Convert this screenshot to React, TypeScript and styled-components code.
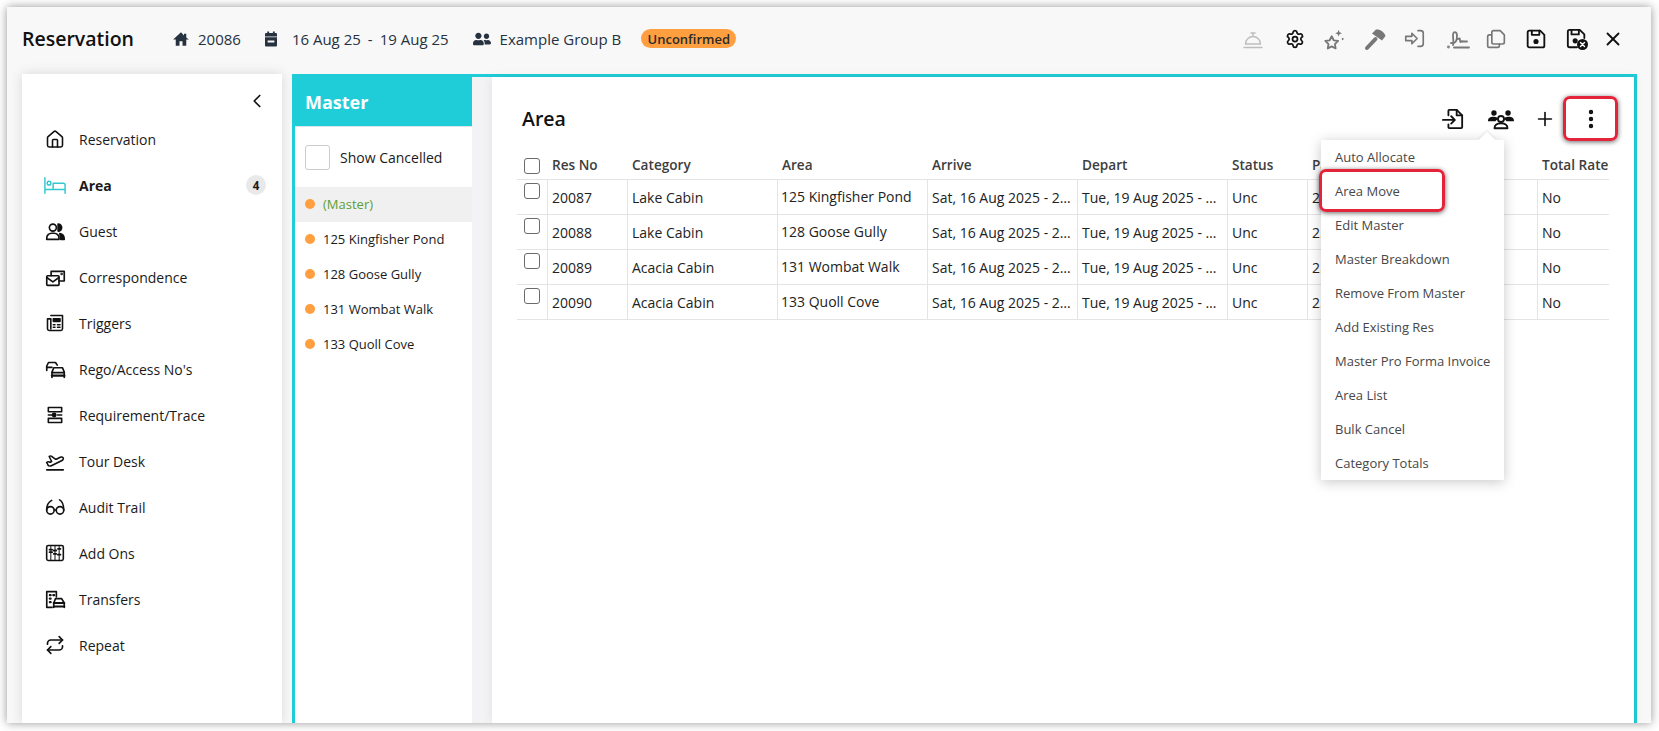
import React from "react";
import styled, { createGlobalStyle } from "styled-components";
import { Settings, X, Plus, EllipsisVertical, Repeat, PlaneTakeoff, House, ChevronLeft } from "lucide-react";
import { FaUserFriends } from "react-icons/fa";

const Global = createGlobalStyle`
  html, body { margin: 0; padding: 0; background: #fff; }
  body { font-family: "Open Sans", "Noto Sans", sans-serif; color: #1a1a1a; }
  * { box-sizing: border-box; }
`;

const Page = styled.div`
  width: 1659px;
  height: 731px;
  padding: 7px 8px 8px 7px;
  overflow: hidden;
`;
const Win = styled.div`
  width: 1644px;
  height: 716px;
  background: #f8f8f8;
  box-shadow: 0 0 9px rgba(0, 0, 0, 0.42);
  display: flex;
  flex-direction: column;
  overflow: hidden;
`;
const TopBar = styled.header`
  height: 67px;
  flex: none;
  display: flex;
  align-items: center;
  padding: 0 0 4px 15px;
`;
const Title = styled.h1`
  margin: 0 40px 0 0;
  width: 110px;
  font-size: 19.5px;
  font-weight: 600;
  color: #111;
  white-space: nowrap;
`;
const Meta = styled.div<{ $gap: number; $mr: number }>`
  display: flex;
  align-items: center;
  gap: ${(p) => p.$gap}px;
  margin-right: ${(p) => p.$mr}px;
  font-size: 15px;
  color: #26323f;
`;
const Dash = styled.span`
  margin: 0 7px;
`;
const Badge = styled.span`
  height: 19px;
  width: 95px;
  margin-left: -4px;
  border-radius: 10px;
  background: #ff9f3f;
  color: #2b2b2b;
  font-size: 13px;
  font-weight: 600;
  display: flex;
  align-items: center;
  justify-content: center;
`;
const TopActions = styled.div`
  margin-left: auto;
  padding-right: 27px;
  display: flex;
  align-items: center;
`;
const TopAction = styled.span<{ $ml: number; $c: string }>`
  display: flex;
  margin-left: ${(p) => p.$ml}px;
  color: ${(p) => p.$c};
`;
const Ico = styled.svg.attrs<{ fill?: string; stroke?: string }>((p) => ({
  viewBox: "0 0 24 24",
  fill: p.fill ?? "none",
  stroke: p.stroke ?? "currentColor",
  strokeLinecap: "round",
  strokeLinejoin: "round",
}))<{ $s?: number }>`
  width: ${(p) => p.$s ?? 20}px;
  height: ${(p) => p.$s ?? 20}px;
  flex: none;
  display: block;
`;

const Body = styled.div`
  flex: 1;
  min-height: 0;
  display: flex;
  padding: 0 14px 0 15px;
`;
const Side = styled.nav`
  width: 260px;
  flex: none;
  background: #fff;
  box-shadow: 0 0 12px rgba(0, 0, 0, 0.13);
  margin-right: 10px;
  display: flex;
  flex-direction: column;
`;
const Collapse = styled.div`
  height: 43px;
  display: flex;
  align-items: center;
  justify-content: flex-end;
  padding: 11px 14px 0 0;
  color: #111;
`;
const SideList = styled.ul`
  list-style: none;
  margin: 0;
  padding: 0;
`;
const SideItem = styled.li<{ $active?: boolean }>`
  height: 46px;
  display: flex;
  align-items: center;
  padding: 0 16px 2px 23px;
  font-size: 14px;
  font-weight: ${(p) => (p.$active ? 700 : 400)};
  color: #1a1a1a;
`;
const SideIcon = styled.span<{ $c?: string }>`
  width: 20px;
  margin-right: 14px;
  display: flex;
  justify-content: center;
  color: ${(p) => p.$c ?? "#111"};
`;
const Count = styled.span`
  margin-left: auto;
  width: 20px;
  height: 20px;
  border-radius: 50%;
  background: #e9e9e9;
  font-size: 11.5px;
  font-weight: 700;
  display: flex;
  align-items: center;
  justify-content: center;
`;

const Frame = styled.div`
  flex: 1;
  min-width: 0;
  border: 3px solid #1fcdd8;
  border-bottom: 0;
  display: flex;
  background: #f3f3f5;
`;
const MasterCol = styled.aside`
  width: 177px;
  flex: none;
  background: #fff;
  margin-right: 20px;
`;
const MasterHead = styled.div`
  height: 50px;
  background: #1fcdd8;
  border-bottom: 1px solid #d9e6e8;
  color: #fff;
  font-size: 18px;
  font-weight: 700;
  display: flex;
  align-items: center;
  padding: 0 0 0 10px;
`;
const ShowRow = styled.label`
  height: 60px;
  display: flex;
  align-items: center;
  padding: 0 0 0 10px;
  font-size: 14px;
  color: #1a1a1a;
`;
const BigBox = styled.span`
  width: 25px;
  height: 25px;
  border: 1px solid #ccc;
  border-radius: 3px;
  margin-right: 10px;
`;
const AreaRow = styled.div<{ $active?: boolean }>`
  height: 35px;
  display: flex;
  align-items: center;
  padding: 0 0 1px 10px;
  font-size: 13px;
  background: ${(p) => (p.$active ? "#f0f0f0" : "#fff")};
  color: ${(p) => (p.$active ? "#5f9e33" : "#1a1a1a")};
`;
const Dot = styled.span`
  width: 10px;
  height: 10px;
  border-radius: 50%;
  background: #ff9f3f;
  margin-right: 8px;
`;

const Main = styled.main`
  flex: 1;
  min-width: 0;
  position: relative;
  background: #fff;
  box-shadow: 0 0 10px rgba(0, 0, 0, 0.08);
  padding: 18px 25px 0;
`;
const MainHead = styled.div`
  height: 48px;
  margin-bottom: 7px;
  display: flex;
  align-items: center;
`;
const MainTitle = styled.h2`
  margin: 0 0 2px 5px;
  font-size: 19.5px;
  font-weight: 600;
  color: #111;
`;
const MainActions = styled.div`
  margin-left: auto;
  margin-right: -10px;
  display: flex;
  align-items: center;
`;
const MainAction = styled.span<{ $w: number }>`
  width: ${(p) => p.$w}px;
  display: flex;
  justify-content: center;
  color: #111;
`;
const Table = styled.table`
  width: 1092px;
  border-collapse: separate;
  border-spacing: 0;
  table-layout: fixed;
`;
const Th = styled.th`
  height: 30px;
  padding: 0 5px;
  border-bottom: 1px solid #e4e4e4;
  text-align: left;
  font-size: 13.6px;
  font-weight: 600;
  color: #3d3d3d;
  white-space: nowrap;
  overflow: hidden;
`;
const Td = styled.td<{ $tight?: boolean }>`
  height: 35px;
  padding: ${(p) => (p.$tight ? "0 2px 2px 3px" : "0 4px")};
  border-bottom: 1px solid #e4e4e4;
  border-left: 1px solid #e4e4e4;
  font-size: 14px;
  color: #222;
  white-space: nowrap;
  overflow: hidden;
  text-overflow: ellipsis;
`;
const CheckTd = styled.td`
  height: 35px;
  padding: 3px 0 0 7px;
  border-bottom: 1px solid #e4e4e4;
  vertical-align: top;
`;
const CheckTh = styled.th`
  padding: 2px 0 0 7px;
  border-bottom: 1px solid #e4e4e4;
`;
const Box = styled.span`
  display: block;
  width: 16px;
  height: 16px;
  border: 1px solid #6b6b6b;
  border-radius: 3px;
  background: #fff;
`;
const Menu = styled.ul`
  position: absolute;
  top: 63px;
  right: 130px;
  width: 183px;
  margin: 0;
  padding: 0;
  list-style: none;
  background: #fff;
  box-shadow: 0 2px 12px rgba(0, 0, 0, 0.22);
  &::before {
    content: "";
    position: absolute;
    top: -6px;
    right: 11px;
    width: 12px;
    height: 12px;
    background: #fff;
    transform: rotate(45deg);
    box-shadow: -1px -1px 2px rgba(0, 0, 0, 0.08);
  }
`;
const MenuItem = styled.li`
  position: relative;
  height: 34px;
  padding: 0 0 1px 14px;
  display: flex;
  align-items: center;
  font-size: 13px;
  color: #474747;
`;
const Callout = styled.div`
  position: absolute;
  border: 3px solid #e3243b;
  border-radius: 7px;
  box-shadow: 0 1px 5px rgba(0, 0, 0, 0.6);
  pointer-events: none;
`;
const MoreCallout = styled(Callout)`
  top: 19px;
  right: 16px;
  width: 55px;
  height: 45px;
`;
const MoveCallout = styled(Callout)`
  top: 92px;
  right: 189px;
  width: 126px;
  height: 43px;
`;

const ICON_W = 1.9;
const I = {
  Home: () => <Ico $s={18} fill="currentColor" stroke="none"><path d="M12 3 1.500 12.500H5V21h5v-6h4v6h5v-8.500h3.500L19 10V5h-3v2.300z" /></Ico>,
  Cal: () => (
    <Ico $s={18} fill="currentColor" stroke="none">
      <path d="M7 2h2.500v2h5V2H17v2h1.500A1.500 1.500 0 0 1 20 5.500v15a1.500 1.500 0 0 1-1.500 1.500h-13A1.500 1.500 0 0 1 4 20.500v-15A1.500 1.500 0 0 1 5.500 4H7z" />
      <path d="M4 8.500h16v1.200H4zM7.500 14h9v2.500h-9z" fill="#f8f8f8" />
    </Ico>
  ),
  Bed: () => <Ico $s={22} strokeWidth={1.6}><path d="M1 4v17M1 17h22M23 21v-9a2 2 0 0 0-2-2H10v7" /><circle cx="5.500" cy="10" r="2" /></Ico>,
  Guest: () => (
    <Ico $s={21} strokeWidth={ICON_W}>
      <circle cx="9" cy="7.500" r="4" />
      <path d="M2 21v-1.500A5.500 5.500 0 0 1 7.500 14h3a5.500 5.500 0 0 1 5.500 5.500V21z" />
      <path d="M15 3.500a4 4 0 0 1 0 8z M17 14.500c3 .5 5 2.500 5 6.500h-4z" fill="currentColor" />
    </Ico>
  ),
  Mail: () => (
    <Ico $s={21} strokeWidth={ICON_W}>
      <path d="M7 10V5h15v11h-6" />
      <rect x="2" y="10" width="14" height="11" rx="1" />
      <path d="m2 12 7 5 7-5" />
      <circle cx="19" cy="8" r=".5" fill="currentColor" />
    </Ico>
  ),
  News: () => (
    <Ico $s={20} strokeWidth={ICON_W}>
      <path d="M7 3h14v16a2 2 0 0 1-2 2H5a2 2 0 0 1-2-2V7h4v12" />
      <path d="M10 7h8v3h-8z" fill="currentColor" />
      <path d="M10 14h2M15 14h3M10 17h2M15 17h3" />
    </Ico>
  ),
  Cars: () => (
    <Ico $s={21} strokeWidth={ICON_W}>
      <path d="M2 13V8l2-4h8l2 3" />
      <path d="M2 9.500h6" />
      <path d="M8 21v-6l2-5h10l2 5v6" />
      <path d="M8 15.500h14" />
      <path d="M8 19h14" strokeWidth={2.8} />
    </Ico>
  ),
  List: () => (
    <Ico $s={20} strokeWidth={ICON_W}>
      <path d="M4 3h16M4 21h16M4 3v5h16V3M4 16v5M20 16v5M4 12h5M15 12h5M4 16h16" />
      <circle cx="11" cy="12" r="2" fill="currentColor" />
    </Ico>
  ),
  Specs: () => (
    <Ico $s={20} strokeWidth={ICON_W}>
      <circle cx="6.500" cy="16" r="4.500" />
      <circle cx="18" cy="16" r="4.500" />
      <path d="M2 16C2 10 4 6 8 4M22.500 16c0-5-.5-10-5-12.500M11 15.500h2.500" />
    </Ico>
  ),
  Abacus: () => (
    <Ico $s={20} strokeWidth={ICON_W}>
      <rect x="2" y="3" width="20" height="18" rx="2" />
      <path d="M7 3v18M12 3v18M17 3v18" strokeWidth={1.2} />
      <path d="M5.500 8h3M5.500 11h3M10.500 13h3M10.500 9h3M15.500 7h3M15.500 14h3" strokeWidth={2.2} />
    </Ico>
  ),
  Transfer: () => (
    <Ico $s={21} strokeWidth={ICON_W}>
      <path d="M8 21H2V3h11v6" />
      <path d="M5.500 7h1M9.500 7h1M5.500 11h1M5.500 15h1" strokeWidth={2.4} />
      <path d="M10 21v-5l2-5h7l3 5v5" />
      <path d="M10 16h12M10 20h12" strokeWidth={2.4} />
    </Ico>
  ),
  Bell: () => (
    <Ico $s={24} strokeWidth={1.4}>
      <path d="M3 20.500h18M4.500 17a7.500 7.500 0 0 1 15 0zM12 9.500V6.500M10 6h4" />
    </Ico>
  ),
  Stars: () => (
    <Ico $s={22} strokeWidth={2}>
      <path d="m9.500 9 2.200 4.400 4.800.7-3.500 3.400.8 4.800-4.300-2.300-4.300 2.300.8-4.800L2.500 14.100l4.800-.7z" />
      <path d="m17 2 1 2.700 2.700 1-2.700 1-1 2.700-1-2.700-2.700-1 2.700-1zM21.500 11a1 1 0 1 0 .01 0" fill="currentColor" stroke="none" />
    </Ico>
  ),
  Hammer: () => (
    <Ico $s={24} strokeWidth={4}>
      <path d="M4 21 12.500 12" />
      <path d="M9 6.500 13 2.500c4-.5 8 2 9.500 6.500L19 13.500z" fill="currentColor" stroke="none" />
    </Ico>
  ),
  Login: () => (
    <Ico $s={21} strokeWidth={1.9}>
      <path d="M2 9.500h7V6l6 6-6 6v-3.500H2zM16 3h3a3 3 0 0 1 3 3v12a3 3 0 0 1-3 3h-3" />
    </Ico>
  ),
  Sign: () => (
    <Ico $s={24} strokeWidth={1.8}>
      <path d="M5 16c4.500 1 6-2 6-7 0-5-4-5-4-1 0 5 1 9 0 10M12 12c2-1 2-1 2 1.500 0 2 1 2 2 .5M16 14.500h5M8 20.500h15" />
      <circle cx="2.500" cy="20" r=".5" fill="currentColor" />
    </Ico>
  ),
  Copy: () => (
    <Ico $s={20} strokeWidth={2}>
      <path d="M9 2h8l5 5v9a2 2 0 0 1-2 2h-11a2 2 0 0 1-2-2V4a2 2 0 0 1 2-2z" />
      <path d="M6 7H4a2 2 0 0 0-2 2v11a2 2 0 0 0 2 2h10a2 2 0 0 0 2-2v-2" />
    </Ico>
  ),
  Save: () => (
    <Ico $s={20} strokeWidth={2.2}>
      <path d="M4 2h13l5 5v13a2 2 0 0 1-2 2H4a2 2 0 0 1-2-2V4a2 2 0 0 1 2-2z" />
      <path d="M7 2v5h9V2" />
      <circle cx="12" cy="15" r="2" fill="currentColor" />
    </Ico>
  ),
  SaveX: () => (
    <Ico $s={22} strokeWidth={2}>
      <path d="M12 21H4a2 2 0 0 1-2-2V4a2 2 0 0 1 2-2h11l5 5v4" />
      <path d="M6 2v5h8V2" />
      <circle cx="10" cy="14" r="1.800" fill="currentColor" />
      <circle cx="18" cy="18" r="6" fill="currentColor" stroke="none" />
      <path d="m15.800 15.800 4.400 4.400m0-4.400-4.400 4.400" stroke="#fff" strokeWidth={1.5} />
    </Ico>
  ),
  FileIn: () => (
    <Ico $s={22} strokeWidth={2}>
      <path d="M7 8V3a1 1 0 0 1 1-1h8l6 6v13a1 1 0 0 1-1 1H8a1 1 0 0 1-1-1v-3" />
      <path d="M16 2v6h6" />
      <path d="M1 13h13M10 9l4 4-4 4" />
    </Ico>
  ),
  Group: () => (
    <Ico $s={26} strokeWidth={1.7}>
      <circle cx="5.500" cy="6.500" r="2.500" fill="currentColor" stroke="none" />
      <circle cx="18.500" cy="6.500" r="2.500" fill="currentColor" stroke="none" />
      <path d="M0 14c0-3 2-4 5-4s4 1 4.500 2c-1 .5-2 1-2.500 2zM24 14c0-3-2-4-5-4s-4 1-4.500 2c1 .5 2 1 2.500 2z" fill="currentColor" stroke="none" />
      <circle cx="12" cy="12" r="2.800" />
      <path d="M6 20.500c0-3 2.500-4.500 6-4.500s6 1.500 6 4.500z" />
    </Ico>
  ),
};

const areas = ["125 Kingfisher Pond", "128 Goose Gully", "131 Wombat Walk", "133 Quoll Cove"];
const sideItems: { label: string; icon: React.ReactNode; active?: boolean }[] = [
  { label: "Reservation", icon: <House size={21} strokeWidth={1.9} /> },
  { label: "Area", icon: <I.Bed />, active: true },
  { label: "Guest", icon: <I.Guest /> },
  { label: "Correspondence", icon: <I.Mail /> },
  { label: "Triggers", icon: <I.News /> },
  { label: "Rego/Access No's", icon: <I.Cars /> },
  { label: "Requirement/Trace", icon: <I.List /> },
  { label: "Tour Desk", icon: <PlaneTakeoff size={21} strokeWidth={1.9} /> },
  { label: "Audit Trail", icon: <I.Specs /> },
  { label: "Add Ons", icon: <I.Abacus /> },
  { label: "Transfers", icon: <I.Transfer /> },
  { label: "Repeat", icon: <Repeat size={20} strokeWidth={2} /> },
];
const rows = [
  ["20087", "Lake Cabin", "125 Kingfisher Pond"],
  ["20088", "Lake Cabin", "128 Goose Gully"],
  ["20089", "Acacia Cabin", "131 Wombat Walk"],
  ["20090", "Acacia Cabin", "133 Quoll Cove"],
];
const menu = ["Auto Allocate", "Area Move", "Edit Master", "Master Breakdown", "Remove From Master", "Add Existing Res", "Master Pro Forma Invoice", "Area List", "Bulk Cancel", "Category Totals"];
const colWidths = [30, 80, 150, 150, 150, 150, 80, 230, 72];

export default function App() {
  return (
    <Page>
      <Global />
      <Win>
        <TopBar>
          <Title>Reservation</Title>
          <Meta $gap={8} $mr={21}><I.Home />20086</Meta>
          <Meta $gap={12} $mr={24}><I.Cal /><span>16 Aug 25<Dash>-</Dash>19 Aug 25</span></Meta>
          <Meta $gap={9} $mr={24}><FaUserFriends size={18} />Example Group B</Meta>
          <Badge>Unconfirmed</Badge>
          <TopActions>
            <TopAction $ml={0} $c="#bdbdbd"><I.Bell /></TopAction>
            <TopAction $ml={20} $c="#111"><Settings size={20} strokeWidth={2.1} /></TopAction>
            <TopAction $ml={18} $c="#777"><I.Stars /></TopAction>
            <TopAction $ml={18} $c="#777"><I.Hammer /></TopAction>
            <TopAction $ml={17} $c="#777"><I.Login /></TopAction>
            <TopAction $ml={21} $c="#777"><I.Sign /></TopAction>
            <TopAction $ml={16} $c="#777"><I.Copy /></TopAction>
            <TopAction $ml={20} $c="#111"><I.Save /></TopAction>
            <TopAction $ml={20} $c="#111"><I.SaveX /></TopAction>
            <TopAction $ml={14} $c="#111"><X size={22} strokeWidth={2} /></TopAction>
          </TopActions>
        </TopBar>
        <Body>
          <Side>
            <Collapse><ChevronLeft size={22} strokeWidth={1.8} /></Collapse>
            <SideList>
              {sideItems.map((s) => (
                <SideItem key={s.label} $active={s.active}>
                  <SideIcon $c={s.active ? "#35c7cf" : undefined}>{s.icon}</SideIcon>
                  {s.label}
                  {s.active && <Count>4</Count>}
                </SideItem>
              ))}
            </SideList>
          </Side>
          <Frame>
            <MasterCol>
              <MasterHead>Master</MasterHead>
              <ShowRow><BigBox />Show Cancelled</ShowRow>
              <AreaRow $active><Dot />(Master)</AreaRow>
              {areas.map((a) => <AreaRow key={a}><Dot />{a}</AreaRow>)}
            </MasterCol>
            <Main>
              <MainHead>
                <MainTitle>Area</MainTitle>
                <MainActions>
                  <MainAction $w={44}><I.FileIn /></MainAction>
                  <MainAction $w={52}><I.Group /></MainAction>
                  <MainAction $w={36}><Plus size={22} strokeWidth={1.8} /></MainAction>
                  <MainAction $w={56}><EllipsisVertical size={24} strokeWidth={2.4} /></MainAction>
                </MainActions>
              </MainHead>
              <Table>
                <colgroup>{colWidths.map((w, i) => <col key={i} style={{ width: w }} />)}</colgroup>
                <thead>
                  <tr>
                    <CheckTh><Box /></CheckTh>
                    <Th>Res No</Th><Th>Category</Th><Th>Area</Th><Th>Arrive</Th><Th>Depart</Th><Th>Status</Th><Th>Pax</Th><Th>Total Rate</Th>
                  </tr>
                </thead>
                <tbody>
                  {rows.map((r) => (
                    <tr key={r[0]}>
                      <CheckTd><Box /></CheckTd>
                      <Td>{r[0]}</Td><Td>{r[1]}</Td><Td $tight>{r[2]}</Td>
                      <Td>Sat, 16 Aug 2025 - 2:00 PM</Td>
                      <Td>Tue, 19 Aug 2025 - 10:00 AM</Td>
                      <Td>Unc</Td><Td>2.00</Td><Td>No</Td>
                    </tr>
                  ))}
                </tbody>
              </Table>
              <Menu>{menu.map((m) => <MenuItem key={m}>{m}</MenuItem>)}</Menu>
              <MoreCallout />
              <MoveCallout />
            </Main>
          </Frame>
        </Body>
      </Win>
    </Page>
  );
}
